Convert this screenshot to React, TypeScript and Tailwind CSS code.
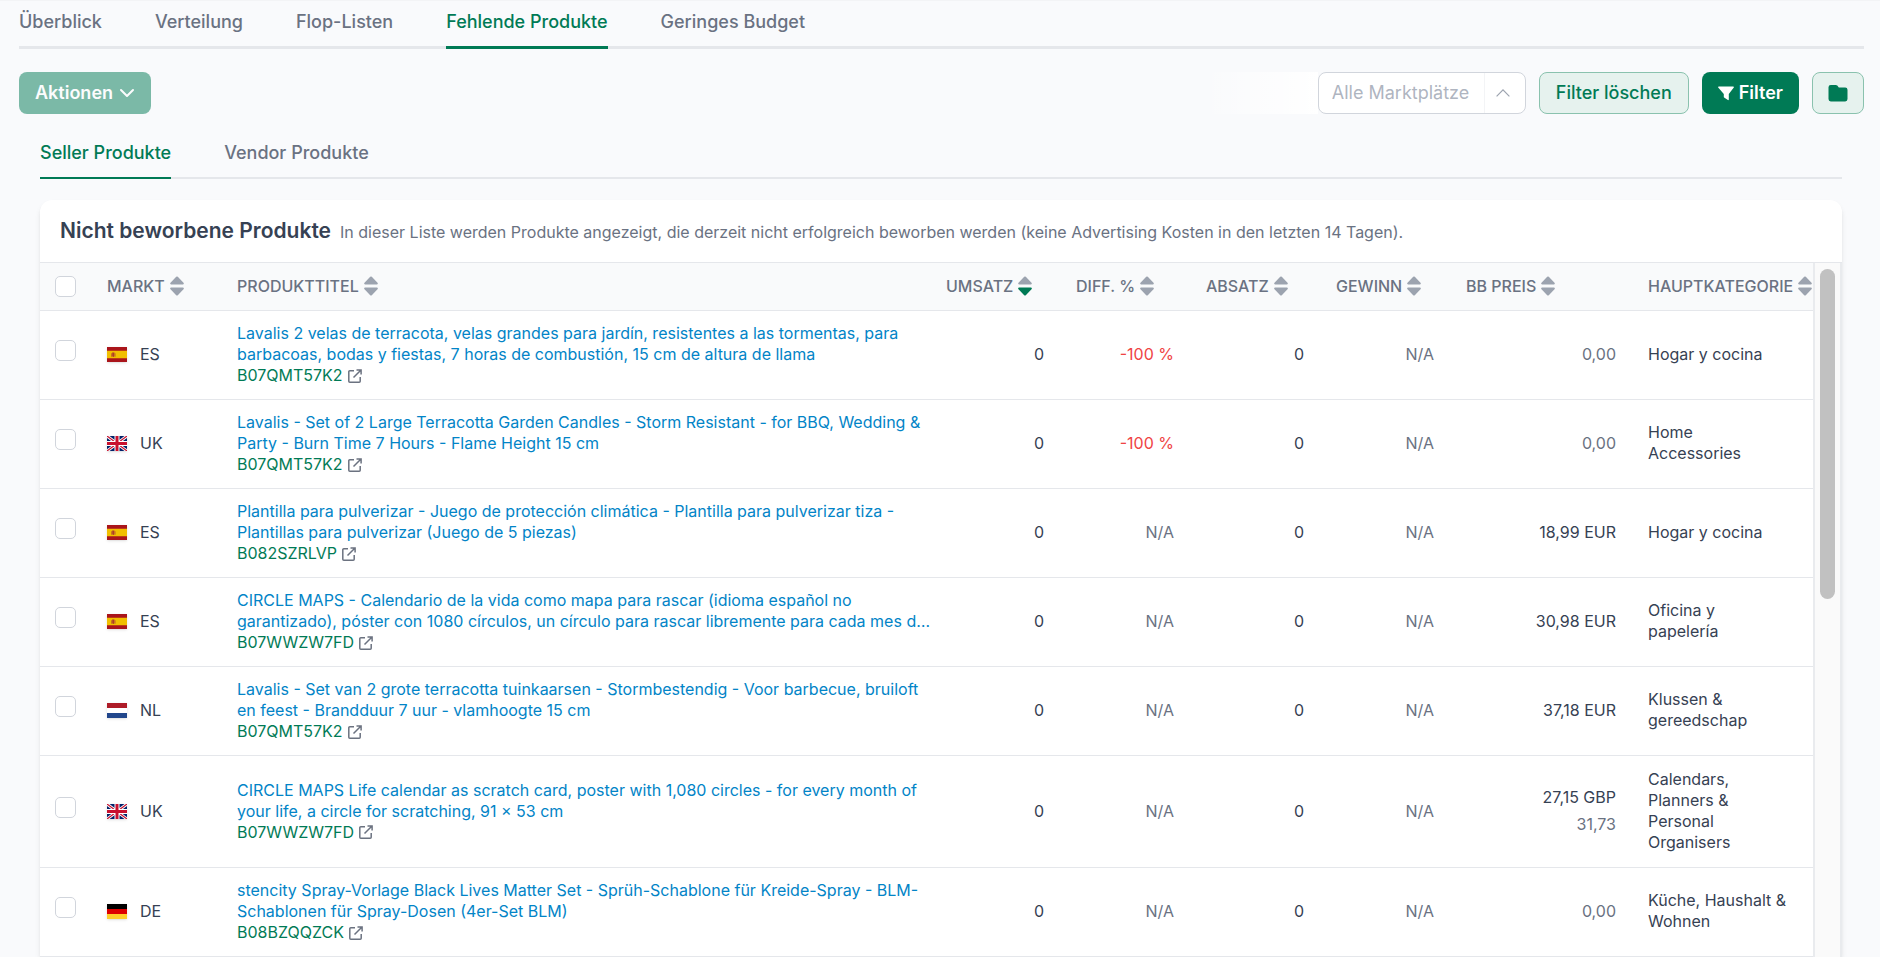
import { useState } from "react";
import clsx from "clsx";

type Market = "ES" | "UK" | "NL" | "DE";

interface Product {
    id: number;
    market: Market;
    title: string;
    asin: string;
    diff: string | null;
    price: string | null;
    converted?: string;
    category: string;
}

const tabs = ["Überblick", "Verteilung", "Flop-Listen", "Fehlende Produkte", "Geringes Budget"];
const productTabs = ["Seller Produkte", "Vendor Produkte"];

const columns = [
    { label: "Markt", width: "w-[130px]" },
    { label: "Produkttitel", width: "" },
    { label: "Umsatz", width: "w-[130px]", sorted: true },
    { label: "Diff. %", width: "w-[130px]" },
    { label: "Absatz", width: "w-[130px]" },
    { label: "Gewinn", width: "w-[130px]" },
    { label: "BB Preis", width: "w-[182px]" },
    { label: "Hauptkategorie", width: "w-[181px]" },
];

const products: Product[] = [
    {
        id: 1,
        market: "ES",
        title: "Lavalis 2 velas de terracota, velas grandes para jardín, resistentes a las tormentas, para barbacoas, bodas y fiestas, 7 horas de combustión, 15 cm de altura de llama",
        asin: "B07QMT57K2",
        diff: "-100 %",
        price: null,
        converted: "0,00",
        category: "Hogar y cocina",
    },
    {
        id: 2,
        market: "UK",
        title: "Lavalis - Set of 2 Large Terracotta Garden Candles - Storm Resistant - for BBQ, Wedding & Party - Burn Time 7 Hours - Flame Height 15 cm",
        asin: "B07QMT57K2",
        diff: "-100 %",
        price: null,
        converted: "0,00",
        category: "Home Accessories",
    },
    {
        id: 3,
        market: "ES",
        title: "Plantilla para pulverizar - Juego de protección climática - Plantilla para pulverizar tiza - Plantillas para pulverizar (Juego de 5 piezas)",
        asin: "B082SZRLVP",
        diff: null,
        price: "18,99 EUR",
        category: "Hogar y cocina",
    },
    {
        id: 4,
        market: "ES",
        title: "CIRCLE MAPS - Calendario de la vida como mapa para rascar (idioma español no garantizado), póster con 1080 círculos, un círculo para rascar libremente para cada mes d…",
        asin: "B07WWZW7FD",
        diff: null,
        price: "30,98 EUR",
        category: "Oficina y papelería",
    },
    {
        id: 5,
        market: "NL",
        title: "Lavalis - Set van 2 grote terracotta tuinkaarsen - Stormbestendig - Voor barbecue, bruiloft en feest - Brandduur 7 uur - vlamhoogte 15 cm",
        asin: "B07QMT57K2",
        diff: null,
        price: "37,18 EUR",
        category: "Klussen & gereedschap",
    },
    {
        id: 6,
        market: "UK",
        title: "CIRCLE MAPS Life calendar as scratch card, poster with 1,080 circles - for every month of your life, a circle for scratching, 91 × 53 cm",
        asin: "B07WWZW7FD",
        diff: null,
        price: "27,15 GBP",
        converted: "31,73",
        category: "Calendars, Planners & Personal Organisers",
    },
    {
        id: 7,
        market: "DE",
        title: "stencity Spray-Vorlage Black Lives Matter Set - Sprüh-Schablone für Kreide-Spray - BLM-Schablonen für Spray-Dosen (4er-Set BLM)",
        asin: "B08BZQQZCK",
        diff: null,
        price: null,
        converted: "0,00",
        category: "Küche, Haushalt & Wohnen",
    },
];

function Flag({ market }: { market: Market }) {
    return (
        <svg viewBox="0 0 20 15" className="h-[15px] w-5 shrink-0 shadow-sm" aria-hidden="true">
            {market === "ES" && (
                <>
                    <path fill="#aa151b" d="M0 0h20v15H0z" />
                    <path fill="#f1bf00" d="M0 3.75h20v7.5H0z" />
                    <path fill="#c8701d" d="M4 6.2h1v3.6H4zM7.6 6.2h1v3.6h-1z" />
                    <path fill="#ad3a2b" d="M5.2 5.5h2.2v3.2c0 .8-.5 1.2-1.1 1.2s-1.1-.4-1.1-1.2z" />
                </>
            )}
            {market === "UK" && (
                <>
                    <path fill="#012169" d="M0 0h20v15H0z" />
                    <path stroke="#fff" strokeWidth="3" d="m0 0 20 15M20 0 0 15" />
                    <path stroke="#c8102e" strokeWidth="1.2" d="m0 0 20 15M20 0 0 15" />
                    <path stroke="#fff" strokeWidth="5" d="M10 0v15M0 7.5h20" />
                    <path stroke="#c8102e" strokeWidth="3" d="M10 0v15M0 7.5h20" />
                </>
            )}
            {market === "NL" && (
                <>
                    <path fill="#fff" d="M0 0h20v15H0z" />
                    <path fill="#ae1c28" d="M0 0h20v5H0z" />
                    <path fill="#21468b" d="M0 10h20v5H0z" />
                </>
            )}
            {market === "DE" && (
                <>
                    <path d="M0 0h20v5H0z" />
                    <path fill="#d00" d="M0 5h20v5H0z" />
                    <path fill="#ffce2b" d="M0 10h20v5H0z" />
                </>
            )}
        </svg>
    );
}

function SortIcon({ active }: { active?: boolean }) {
    return (
        <svg viewBox="0 0 14 20" className="h-5 w-[14px] shrink-0" aria-hidden="true">
            <path fill="#9ca3af" d="M6.2.8a1.1 1.1 0 0 1 1.6 0l5.7 6c.7.7.3 1.7-.6 1.7H1.1C.2 8.5-.2 7.5.5 6.8z" />
            <path
                fill={active ? "#007a55" : "#9ca3af"}
                d="M6.2 19.2a1.1 1.1 0 0 0 1.6 0l5.7-6c.7-.7.3-1.7-.6-1.7H1.1c-.9 0-1.3 1-.6 1.7z"
            />
        </svg>
    );
}

function ExternalIcon() {
    return (
        <svg viewBox="0 0 14 14" className="h-[14px] w-[14px]" fill="none" stroke="#6b7280" strokeWidth="1.5" aria-hidden="true">
            <path strokeLinejoin="round" d="M6 1.8H1.8a1 1 0 0 0-1 1v9.4a1 1 0 0 0 1 1h9.4a1 1 0 0 0 1-1V8" />
            <path d="M8.5.9h4.6v4.6M13 1 5.5 8.5" />
        </svg>
    );
}

function Checkbox({ label }: { label: string }) {
    return (
        <input
            type="checkbox"
            aria-label={label}
            className="block h-[21px] w-[21px] appearance-none rounded-[5px] border border-gray-300 bg-white checked:border-emerald-700 checked:bg-emerald-700"
        />
    );
}

function ProductRow({ product }: { product: Product }) {
    return (
        <tr className="h-[89px] border-b border-gray-200">
            <td className="pb-2 pl-[15px]">
                <Checkbox label={product.title} />
            </td>
            <td className="px-4">
                <div className="flex items-center gap-[13px]">
                    <Flag market={product.market} />
                    {product.market}
                </div>
            </td>
            <td className="pl-4">
                <a href="#" className="block text-[#0284c7]">{product.title}</a>
                <a href="#" className="flex items-center gap-[5px] text-emerald-700">
                    {product.asin}
                    <ExternalIcon />
                </a>
            </td>
            <td className="px-4 text-right">0</td>
            <td className={clsx("px-4 text-right", product.diff ? "text-[#ef4444]" : "text-gray-500")}>{product.diff ?? "N/A"}</td>
            <td className="px-4 text-right">0</td>
            <td className="px-4 text-right text-gray-500">N/A</td>
            <td className="px-4 text-right">
                {product.price && <div>{product.price}</div>}
                {product.converted && (
                    <div className={clsx("text-gray-500", product.price && "mt-[6px]")}>{product.converted}</div>
                )}
            </td>
            <td className="pt-[13px] pr-[26px] pb-[14px] pl-4">{product.category}</td>
        </tr>
    );
}

export default function App() {
    const [tab, setTab] = useState("Fehlende Produkte");
    const [productTab, setProductTab] = useState("Seller Produkte");

    return (
        <div className="min-h-screen border-t border-gray-100 bg-[#f9fafc] pr-4 pl-[19px] font-['Inter',sans-serif] text-base leading-[21px] text-gray-700">
            <nav className="flex gap-[53px] border-b-[3px] border-gray-200 text-lg leading-6 font-medium">
                {tabs.map((name) => (
                    <button
                        key={name}
                        onClick={() => setTab(name)}
                        className={clsx(
                            "-mb-[3px] border-b-[3px] pt-[9px] pb-3",
                            name === tab ? "border-emerald-700 text-emerald-700" : "border-transparent text-gray-500"
                        )}
                    >
                        {name}
                    </button>
                ))}
            </nav>

            <div className="mt-[23px] flex items-center justify-between text-lg leading-6 font-medium">
                <button className="flex h-[42px] items-center gap-[6px] rounded-lg bg-emerald-700 px-4 font-semibold text-white opacity-50">
                    Aktionen
                    <svg viewBox="0 0 16 16" className="h-4 w-4" fill="none" stroke="currentColor" strokeWidth="2" strokeLinecap="round" strokeLinejoin="round" aria-hidden="true">
                        <path d="m2 5 6 6 6-6" />
                    </svg>
                </button>

                <div className="flex items-center gap-[13px]">
                    <div className="flex">
                        <div className="h-[42px] w-[116px] bg-linear-to-r from-transparent to-white" />
                        <div className="relative">
                            <select
                                aria-label="Marktplatz"
                                className="h-[42px] w-[208px] appearance-none rounded-lg border border-gray-300 bg-white px-[13px] font-normal text-gray-400/80"
                            >
                                <option>Alle Marktplätze</option>
                            </select>
                            <div className="pointer-events-none absolute inset-y-px right-px flex w-[41px] items-center justify-center border-l border-gray-100">
                                <svg viewBox="0 0 14 8" className="mr-1 h-2 w-[14px]" fill="none" stroke="#9ca3af" strokeWidth="1.2" aria-hidden="true">
                                    <path d="M.6 7.3 7 .9l6.4 6.4" />
                                </svg>
                            </div>
                        </div>
                    </div>
                    <button className="h-[42px] rounded-lg border border-[#8ac2ae] bg-[#e6f2ee] px-4 text-emerald-700">Filter löschen</button>
                    <button className="flex h-[42px] items-center gap-[5px] rounded-lg bg-emerald-700 px-4 font-semibold text-white">
                        <svg viewBox="0 0 16 16" className="h-4 w-4" fill="currentColor" aria-hidden="true">
                            <path d="M.8 1.5h14.400c.6 0 .9.6.6 1.100L10.800 9v5.600c0 .5-.5.8-.9.5l-3.800-2.600a.7.7 0 0 1-.3-.6V9L.2 2.600C-.1 2.100.2 1.500.8 1.500z" />
                        </svg>
                        Filter
                    </button>
                    <button aria-label="Ordner" className="flex h-[42px] w-[52px] items-center justify-center rounded-lg border border-[#8ac2ae] bg-[#e6f2ee] text-emerald-700">
                        <svg viewBox="0 0 20 18" className="h-[18px] w-5" fill="currentColor" aria-hidden="true">
                            <path d="M.5 3.200A2.300 2.300 0 0 1 2.800.9h5c.6 0 1.100.2 1.500.7l1.500 1.900h6.400a2.300 2.300 0 0 1 2.300 2.300v9.300a2.300 2.300 0 0 1-2.300 2.300H2.800a2.300 2.300 0 0 1-2.300-2.300z" />
                        </svg>
                    </button>
                </div>
            </div>

            <div className="pr-[22px] pl-[21px]">
                <nav className="mt-[27px] flex gap-[53px] border-b-2 border-gray-200 text-lg leading-6 font-medium">
                    {productTabs.map((name) => (
                        <button
                            key={name}
                            onClick={() => setProductTab(name)}
                            className={clsx(
                                "-mb-[2px] border-b-2 pb-3",
                                name === productTab ? "border-emerald-700 text-emerald-700" : "border-transparent text-gray-500"
                            )}
                        >
                            {name}
                        </button>
                    ))}
                </nav>

                <section className="mt-[21px] overflow-hidden rounded-t-xl bg-white shadow-md">
                    <header className="flex items-baseline gap-[9px] px-5 py-[17px]">
                        <h2 className="text-[21px] leading-7 font-semibold">Nicht beworbene Produkte</h2>
                        <p className="text-gray-500">
                            In dieser Liste werden Produkte angezeigt, die derzeit nicht erfolgreich beworben werden (keine Advertising Kosten in den letzten 14 Tagen).
                        </p>
                    </header>

                    <div className="flex border-t border-gray-200">
                        <table className="w-full flex-1 table-fixed">
                            <thead>
                                <tr className="h-[47px] border-b border-gray-200 bg-gray-50 text-left text-gray-500 uppercase">
                                    <th className="w-[51px] pl-[15px]">
                                        <Checkbox label="Alle auswählen" />
                                    </th>
                                    {columns.map((column) => (
                                        <th key={column.label} className={clsx("pl-4 font-medium", column.width)}>
                                            <button className="flex items-center gap-[5px] uppercase">
                                                {column.label}
                                                <SortIcon active={column.sorted} />
                                            </button>
                                        </th>
                                    ))}
                                </tr>
                            </thead>
                            <tbody>
                                {products.map((product) => (
                                    <ProductRow key={product.id} product={product} />
                                ))}
                            </tbody>
                        </table>
                        <div className="w-[29px] shrink-0 border-x-2 border-gray-200/80 bg-[#fafafa] px-[5px] pt-[6px]">
                            <div className="h-[330px] rounded-full bg-[#c1c1c1]" />
                        </div>
                    </div>
                </section>
            </div>
        </div>
    );
}
